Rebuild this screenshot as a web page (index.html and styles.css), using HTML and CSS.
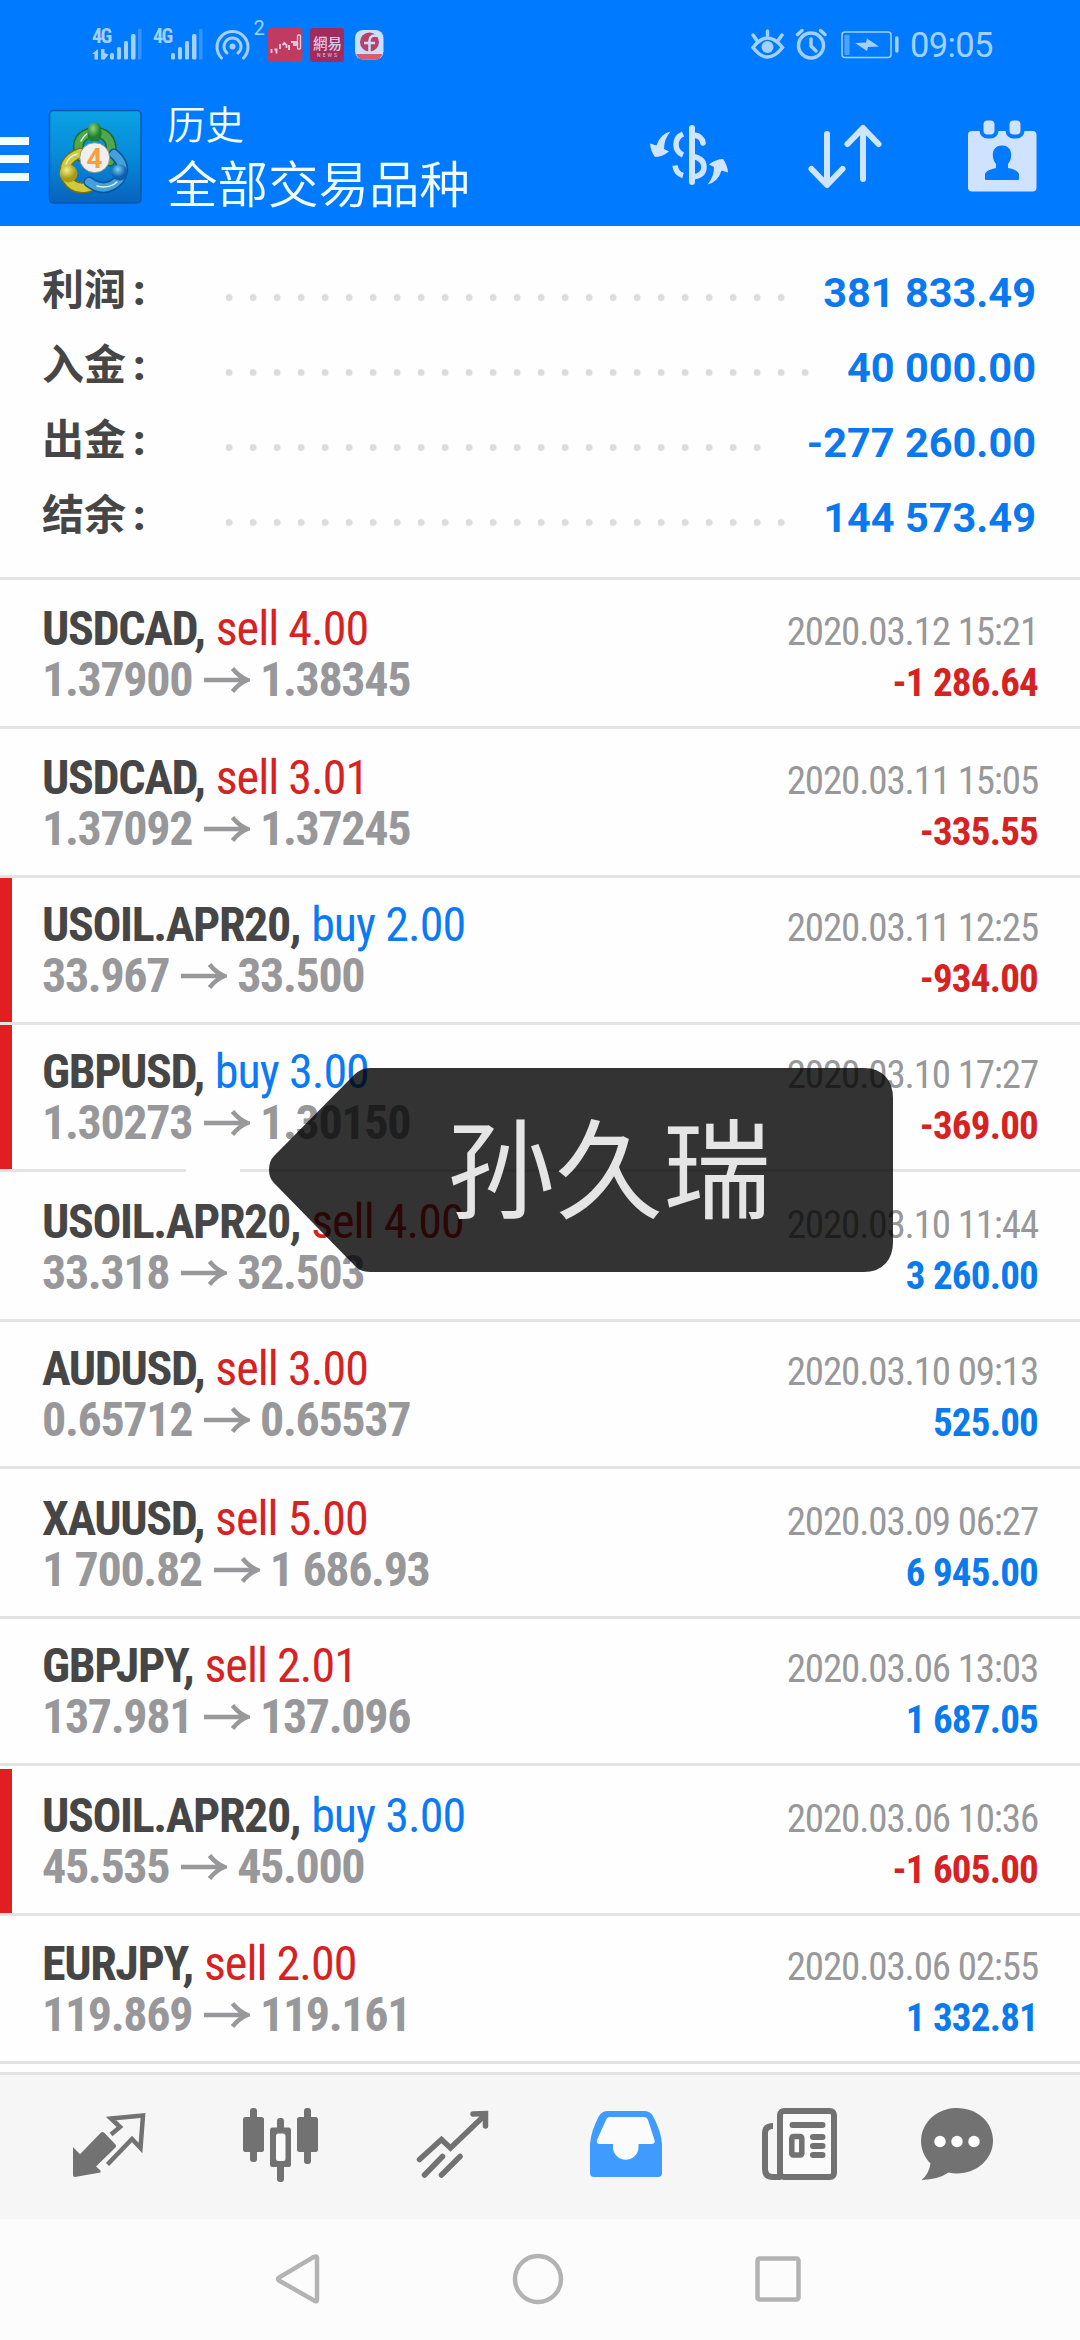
FILE: index.html
```html
<!DOCTYPE html>
<html lang="zh-CN">
<head>
<meta charset="utf-8">
<title>历史</title>
<link rel="stylesheet" href="styles.css">
</head>
<body>
<header class="top">
  <div class="status">
    <svg class="status-left" viewBox="88 16 300 50" width="300" height="50">
      <g fill="#a3d0ff">
        <g class="net"><text x="92" y="42.500">4G</text><text x="153" y="42.500">4G</text></g>
        <path d="M92 54l6-5v10.500h-3.500v-5.500zM101 49h3.500v4l4 1.500l-4 5h-3.500z"/>
        <rect x="110" y="53" width="4" height="6.500" rx="1.500"/><rect x="117" y="47" width="4" height="12.500" rx="1.500"/><rect x="124" y="41" width="4" height="18.500" rx="1.500"/><rect x="131" y="34" width="4.500" height="25.500" rx="1.500"/><rect x="138" y="29" width="3.500" height="30.500" opacity=".3"/>
        <rect x="171" y="53" width="4" height="6.500" rx="1.500"/><rect x="178" y="47" width="4" height="12.500" rx="1.500"/><rect x="185" y="41" width="4" height="18.500" rx="1.500"/><rect x="192" y="34" width="4.500" height="25.500" rx="1.500"/><rect x="199" y="29" width="3.500" height="30.500" opacity=".3"/>
        <circle cx="232.500" cy="46.500" r="3"/>
        <text class="count" x="253.500" y="35">2</text>
      </g>
      <g fill="none" stroke="#a3d0ff" stroke-width="3" stroke-linecap="round">
        <path d="M221.500 58a15.500 15.500 0 1 1 22 0M227 53a8.500 8.500 0 1 1 11 0"/>
      </g>
      <rect x="268" y="28" width="34.500" height="34" rx="3" fill="#bf3b62"/>
      <path d="M271.500 49v4M274.500 49.500h2v4M280 44v5M282.500 45l2-2 2 2v3M289 45v5M291 42h3v4M296 41v5" fill="none" stroke="#ead0e4" stroke-width="1.800"/>
      <rect x="297.500" y="35" width="3" height="14" rx="1" fill="none" stroke="#ead0e4" stroke-width="1.300"/>
      <rect x="310" y="28" width="34" height="34" rx="3" fill="#a02b5d"/>
      <text class="news" x="313" y="48.500" fill="#dccbe8">網易</text>
      <text class="news-sub" x="317" y="56.500" textLength="20" fill="#dccbe8">NEWS</text>
      <rect x="355" y="30" width="28.500" height="29.500" rx="8" fill="#c9dfff"/>
      <path d="M356 54h26.500q-2 5.500-7 5.500h-12.500q-5 0-7-5.500z" fill="#d85d6f"/>
      <circle cx="369.500" cy="42" r="9.500" fill="#b94166"/>
      <path d="M378 36q-8-2-8.500 4.500v13M364 43h11" fill="none" stroke="#c9dfff" stroke-width="2.500"/>
    </svg>
    <svg class="status-right" viewBox="748 24 154 40" width="154" height="40">
      <g fill="none" stroke="#a3d0ff" stroke-width="3.500" stroke-linecap="round">
        <path d="M753 47.500q14.500-19 29.500 0q-15 19-29.500 0zM767.500 31v4M753 35l3.500 5M782 35l-3.500 5"/>
        <circle cx="811" cy="45.500" r="12.500"/><path d="M811 39v7l5 5M797.500 34.500l4.500-4M825 34.500l-4.500-4"/>
        <path d="M896.800 38v13"/>
        <rect x="842" y="32" width="49" height="25.500" rx="3" stroke-width="1.500"/>
      </g>
      <circle cx="767.500" cy="47" r="6" fill="#a3d0ff"/>
      <rect x="844.500" y="35" width="5" height="20" rx="1" fill="#4da3ff"/>
      <path d="M855 43l11-0.500 1-4 12 8-11 .5-1 4z" fill="#a3d0ff"/>
    </svg>
    <span class="clock">09:05</span>
  </div>
  <div class="bar">
    <div class="menu"><i></i><i></i><i></i></div>
    <svg class="logo" viewBox="48 109 95 96" width="95" height="96">
      <defs>
        <linearGradient id="sky" x1="0" y1="0" x2="0" y2="1"><stop offset="0" stop-color="#0aa2e4"/><stop offset=".5" stop-color="#078ad8"/><stop offset="1" stop-color="#0763bd"/></linearGradient>
        <radialGradient id="gr" cx=".4" cy=".3"><stop offset="0" stop-color="#8fd67c"/><stop offset="1" stop-color="#1c7f31"/></radialGradient>
        <radialGradient id="ye" cx=".4" cy=".3"><stop offset="0" stop-color="#f3f08c"/><stop offset="1" stop-color="#a89a12"/></radialGradient>
        <radialGradient id="bl" cx=".4" cy=".3"><stop offset="0" stop-color="#7cd0f7"/><stop offset="1" stop-color="#0b5fae"/></radialGradient>
      </defs>
      <rect x="49.500" y="110.500" width="91.500" height="92.500" rx="4" fill="url(#sky)" stroke="#0759ae" stroke-width="1.500"/>
      <g fill="none" stroke-linecap="round">
        <path d="M110 161q6-27-15-29q-22 3-15 24" stroke="#1b6b2e" stroke-width="11"/>
        <path d="M110 161q6-27-15-29q-22 3-15 24" stroke="#4fa84c" stroke-width="8"/>
        <path d="M80 153q-20 8-13 26q9 14 27 6" stroke="#77700d" stroke-width="11"/>
        <path d="M80 153q-20 8-13 26q9 14 27 6" stroke="#cfcb38" stroke-width="8"/>
        <path d="M114 154q14 12 5 26q-14 14-30 2" stroke="#0c5599" stroke-width="11"/>
        <path d="M114 154q14 12 5 26q-14 14-30 2" stroke="#45a0dc" stroke-width="8"/>
        <path d="M81 141q4-7 8-8M66 164q3-8 11-10M97 186q12 3 20-4" stroke="#e2f5d8" stroke-width="1.500"/>
      </g>
      <circle cx="94.500" cy="129" r="6.500" fill="url(#gr)"/><path d="M94.500 123c8 0 9 14 4 18h-8c-5-4-4-18 4-18z" fill="url(#gr)"/><circle cx="68.500" cy="173.500" r="9" fill="url(#ye)"/><circle cx="119.500" cy="172.500" r="8" fill="url(#bl)"/>
      <circle cx="94.700" cy="157.700" r="15" fill="#f1eef0" stroke="#8c9a84" stroke-width="1"/>
      <text class="four" x="94.500" y="167.500" text-anchor="middle">4</text>
    </svg>
    <div class="titles"><div class="title">历史</div><div class="subtitle">全部交易品种</div></div>
    <svg class="act-money" viewBox="648 115 84 80" width="84" height="80">
      <g fill="none" stroke="#cfe5ff" stroke-width="5.500">
        <path d="M692 128v54" stroke-width="6" stroke-linecap="round"/>
        <path d="M683 134q-7 3-7 10.500t7 10.500"/><path d="M683 175.500q-7-2-8-10"/><path d="M694 135q8 1 9 8" stroke-linecap="round"/><path d="M693 156.500q11 2 11 10.500t-11 10"/>
      </g>
      <path id="turn" d="M670.500 131.500Q660 134 656.500 145.500L650 143.500Q650.500 151 655 157Q662 157 669 151.500L664 149Q664 139 670.500 131.500Z" fill="#cfe5ff"/>
      <use href="#turn" transform="rotate(180 689 158)"/>
    </svg>
    <svg class="act-sort" viewBox="804 115 82 80" width="82" height="80">
      <g fill="none" stroke="#cfe5ff" stroke-width="6" stroke-linecap="round" stroke-linejoin="round"><path d="M827 134v50.500M811.500 169l15.500 16 15.500-16M863 179v-50.500M847.500 144l15.500-16 15.500 16"/></g>
    </svg>
    <svg class="act-date" viewBox="964 115 76 80" width="76" height="80">
      <rect x="968" y="131" width="68.500" height="60.500" rx="4" fill="#cfe2ff"/>
      <g fill="#cfe2ff" stroke="#007aff" stroke-width="4"><rect x="981.500" y="118.500" width="15" height="18" rx="6"/><rect x="1007.500" y="118.500" width="15" height="18" rx="6"/></g>
      <path d="M1002 145.500c11 0 11 13 6 18.500v4q10 2 11 6v5q0 1-1 1h-32q-1 0-1-1v-5q1-4 11-6v-4c-5-5.500-5-18.500 6-18.500z" fill="#007aff"/>
    </svg>
  </div>
</header>

<section class="summary">
  <div class="sum-row"><span class="label">利润<b>:</b></span><span class="dots"></span><span class="amount">381 833.49</span></div>
  <div class="sum-row"><span class="label">入金<b>:</b></span><span class="dots"></span><span class="amount">40 000.00</span></div>
  <div class="sum-row"><span class="label">出金<b>:</b></span><span class="dots"></span><span class="amount">-277 260.00</span></div>
  <div class="sum-row"><span class="label">结余<b>:</b></span><span class="dots"></span><span class="amount">144 573.49</span></div>
</section>

<svg class="defs" width="0" height="0"><symbol id="arrow" viewBox="0 0 46 26"><path d="M0 13h43M28.500 1.500q7 8.500 15 11.500q-8 3-15 11.500" fill="none" stroke="#98989b" stroke-width="4.500"/></symbol></svg>

<main class="deals">
  <div class="deal h149"><div class="left"><div><b>USDCAD,</b> <span class="sell">sell 4.00</span></div><div class="price">1.37900<svg><use href="#arrow"/></svg>1.38345</div></div><div class="right"><div>2020.03.12 15:21</div><div class="loss">-1 286.64</div></div></div>
  <div class="deal h149"><div class="left"><div><b>USDCAD,</b> <span class="sell">sell 3.01</span></div><div class="price">1.37092<svg><use href="#arrow"/></svg>1.37245</div></div><div class="right"><div>2020.03.11 15:05</div><div class="loss">-335.55</div></div></div>
  <div class="deal h147 marked"><div class="left"><div><b>USOIL.APR20,</b> <span class="buy">buy 2.00</span></div><div class="price">33.967<svg><use href="#arrow"/></svg>33.500</div></div><div class="right"><div>2020.03.11 12:25</div><div class="loss">-934.00</div></div></div>
  <div class="deal h147 marked"><div class="left"><div><b>GBPUSD,</b> <span class="buy">buy 3.00</span></div><div class="price">1.30273<svg><use href="#arrow"/></svg>1.30150</div></div><div class="right"><div>2020.03.10 17:27</div><div class="loss">-369.00</div></div></div>
  <div class="deal h150"><div class="left"><div><b>USOIL.APR20,</b> <span class="sell">sell 4.00</span></div><div class="price">33.318<svg><use href="#arrow"/></svg>32.503</div></div><div class="right"><div>2020.03.10 11:44</div><div class="gain">3 260.00</div></div></div>
  <div class="deal h147"><div class="left"><div><b>AUDUSD,</b> <span class="sell">sell 3.00</span></div><div class="price">0.65712<svg><use href="#arrow"/></svg>0.65537</div></div><div class="right"><div>2020.03.10 09:13</div><div class="gain">525.00</div></div></div>
  <div class="deal h150"><div class="left"><div><b>XAUUSD,</b> <span class="sell">sell 5.00</span></div><div class="price">1 700.82<svg><use href="#arrow"/></svg>1 686.93</div></div><div class="right"><div>2020.03.09 06:27</div><div class="gain">6 945.00</div></div></div>
  <div class="deal h147"><div class="left"><div><b>GBPJPY,</b> <span class="sell">sell 2.01</span></div><div class="price">137.981<svg><use href="#arrow"/></svg>137.096</div></div><div class="right"><div>2020.03.06 13:03</div><div class="gain">1 687.05</div></div></div>
  <div class="deal h150 marked short"><div class="left"><div><b>USOIL.APR20,</b> <span class="buy">buy 3.00</span></div><div class="price">45.535<svg><use href="#arrow"/></svg>45.000</div></div><div class="right"><div>2020.03.06 10:36</div><div class="loss">-1 605.00</div></div></div>
  <div class="deal h148"><div class="left"><div><b>EURJPY,</b> <span class="sell">sell 2.00</span></div><div class="price">119.869<svg><use href="#arrow"/></svg>119.161</div></div><div class="right"><div>2020.03.06 02:55</div><div class="gain">1 332.81</div></div></div>
</main>

<nav class="tabs">
  <svg viewBox="69 2100 80 90"><path d="M73 2147l7 7.300L101 2132.500q1.500-1 3 0l11.500 12q1.500 1.500 0 3L96 2166.500l4.500 4v2L75 2177q-2 0-2-2z" fill="#727272"/><path d="M111 2134.500l9-7.500-9-8.500 32-3-2.500 32.500-8.500-9-24.500 25.500" fill="none" stroke="#727272" stroke-width="4.500"/></svg>
  <svg viewBox="241 2100 80 90"><g fill="#727272"><rect x="243" y="2117" width="21" height="35" rx="2.500"/><rect x="250" y="2108" width="7" height="54" rx="3"/><rect x="277" y="2118" width="7" height="64" rx="3"/><rect x="270" y="2127.500" width="21" height="39.500" rx="2.500"/><rect x="297" y="2117" width="21" height="35" rx="2.500"/><rect x="304" y="2108" width="7" height="56" rx="3"/></g><rect x="276" y="2133.500" width="9.500" height="27.500" rx="2.500" fill="#fafafa"/></svg>
  <svg viewBox="413 2100 80 90"><path d="M419.500 2159.500l22-20 9 8.500 35-33.500M473 2114l12.500-.5v12.500M424.500 2175l18-18.500M441.500 2175l18.500-18.500" fill="none" stroke="#727272" stroke-width="5.500" stroke-linecap="round"/></svg>
  <svg viewBox="585 2100 80 90"><path d="M590 2144q1-13 9-28 3-5 9-5h36q6 0 9 5 8 15 9 28v29q0 4-4 4h-64q-4 0-4-4z" fill="#409bff"/><path d="M606 2120q1-3 4-3h33q4 0 5 3l6.500 20q1 4-3 4h-13v3a12.500 12.500 0 0 1-25.500 0v-3h-13q-4 0-3-4z" fill="#fbfbfb"/></svg>
  <svg viewBox="757 2100 80 90"><rect x="780" y="2111" width="54" height="66" rx="4" fill="#fbfbfb"/><g fill="none" stroke="#727272" stroke-width="6"><rect x="780" y="2111" width="54" height="66" rx="4"/><path d="M773 2126q-8 0-8 7v36q0 8 8 8h8"/><g stroke-linecap="round"><path d="M792.500 2125h30M813 2137h9.500M813 2146h9.500M813 2155h9.500"/></g><rect x="791.800" y="2136.500" width="10" height="18.500" rx="1.500" stroke-width="5.500"/></g></svg>
  <svg class="chat" viewBox="917 2100 80 90"><path d="M957 2108c20 0 36 14 36 32.500s-16 33-36 33q-4 0-8.500-1-10 7-27 7.500 7.500-6 9-16.500c-21-23-4-55.500 26.500-55.500z" fill="#727272"/><g fill="#fff"><circle cx="940" cy="2141.500" r="5.700"/><circle cx="957" cy="2141.500" r="5.700"/><circle cx="974" cy="2141.500" r="5.700"/></g></svg>
</nav>
<footer class="keys">
  <svg viewBox="272 2250 51 58" width="51" height="58"><path d="M315.500 2256.500q1.500 0 1.500 2v41q0 2.500-2 1.500l-36-20.500q-2-1.500 0-3l34.500-20.500z"/></svg>
  <svg viewBox="510 2250 56 58" width="56" height="58"><circle cx="538" cy="2279" r="23"/></svg>
  <svg viewBox="751 2250 54 58" width="54" height="58"><rect x="757.500" y="2258.500" width="41" height="41" rx="2"/></svg>
</footer>

<div class="tag">
  <svg viewBox="269 1068 624 204" width="624" height="204"><path d="M374 1068H864Q878 1068 886 1077Q893 1085 893 1098V1242Q893 1255 886 1263Q878 1272 864 1272H370Q361 1272 355 1266L274 1183Q269 1178 269 1170Q269 1161 274 1156L354 1075Q361 1068 370 1068Z" fill="#000" fill-opacity=".8"/></svg>
  <span>孙久瑞</span>
</div>
</body>
</html>
```
FILE: styles.css
```css
* { box-sizing: border-box; }
body {
  margin: 0;
  width: 1080px;
  height: 2340px;
  position: relative;
  display: flex;
  flex-direction: column;
  overflow: hidden;
  background: #fefefe;
  font-family: "Roboto Condensed", Roboto, "Noto Sans CJK SC", sans-serif;
}
svg { display: block; flex: none; }
.defs { position: absolute; }

.top { height: 226px; background: #007aff; color: #f2fdff; }
.status { height: 88px; padding: 16px 88px 0; display: flex; align-items: flex-start; color: #a3d0ff; }
.status-right { margin: 8px 8px 0 360px; }
.net { font-size: 20px; font-weight: 700; letter-spacing: -1.5px; }
.count { font: 20px Roboto, sans-serif; }
.news { font: 500 14.5px "Noto Sans CJK TC", sans-serif; }
.news-sub { font: 400 5px Roboto, sans-serif; }
.clock { font: 34.5px/40px Roboto, sans-serif; letter-spacing: -0.6px; margin-top: 9px; }
.bar { display: flex; height: 138px; align-items: flex-start; }
.menu { width: 29px; margin-top: 49px; display: flex; flex-direction: column; gap: 10px; }
.menu i { height: 8px; background: #f2fdff; }
.logo { margin: 21px 0 0 19px; }
.four { font: 700 28px Roboto, sans-serif; fill: #f5a03c; }
.titles { margin: 6px 0 0 24px; width: 481px; font-family: "Noto Sans CJK SC", sans-serif; font-weight: 350; }
.title { font-size: 38.5px; line-height: 56px; }
.subtitle { font-size: 50.5px; line-height: 63px; }
.act-money, .act-sort, .act-date { margin-top: 27px; }
.act-sort { margin-left: 72px; }
.act-date { margin-left: 78px; }

.summary { height: 354px; padding: 30px 44px 0 42px; border-bottom: 3px solid #e3e3e3; }
.sum-row { height: 75px; display: flex; }
.label { width: 184px; font: 700 42px/62px "Noto Sans CJK SC", sans-serif; color: #464646; }
.label b { font-family: Roboto, sans-serif; margin-left: 7px; }
.dots { flex: 1; margin-right: 30px; background: radial-gradient(circle at 3px 50%, #dcdcdc 2.8px, transparent 4.2px) 0 4px / 24px 75px repeat-x; }
.amount { font: 700 41.5px/74px Roboto, sans-serif; color: #0a78ee; }

.deal { display: flex; justify-content: space-between; align-items: flex-end; padding: 0 42px 0 42px; border-bottom: 3px solid #e3e3e3; }
.h147 { height: 147px; }
.h148 { height: 148px; }
.h149 { height: 149px; }
.h150 { height: 150px; }
.marked { background: linear-gradient(#e21e20, #e21e20) 0 0 / 12px 100% no-repeat padding-box; }
.short { background-position: 0 3px; }
.left { font-size: 48px; line-height: 51px; color: #464646; padding-bottom: 21px; white-space: nowrap; }
.left b { letter-spacing: -1.4px; }
.left span { letter-spacing: -0.95px; }
.right { font-size: 39px; line-height: 51px; color: #98989b; padding-bottom: 17px; text-align: right; white-space: nowrap; letter-spacing: -1.15px; }
.price { display: flex; align-items: center; color: #98989b; font-weight: 700; letter-spacing: -1.35px; }
.price svg { width: 46px; height: 26px; margin: 1px 10px 0 12px; }
.sell { color: #d62222; }
.buy { color: #0a7af5; }
.loss { color: #d62222; font-weight: 700; letter-spacing: -0.8px; }
.gain { color: #0a7aec; font-weight: 700; letter-spacing: -0.8px; }

.tabs { margin-top: 8px; height: 147px; border-top: 3px solid #e3e3e3; background: #f6f6f6; padding: 25px 0 0 69px; display: flex; gap: 92px; }
.tabs svg { width: 80px; height: 90px; overflow: visible; }
.tabs .chat { margin-left: -12px; }
.keys { height: 121px; background: #fcfcfc; display: flex; padding: 31px 0 0 272px; }
.keys svg { fill: none; stroke: #b3b3b3; stroke-width: 4.500; margin-right: 187px; }
.keys svg + svg { margin-right: 185px; }

.tag { position: absolute; left: 269px; top: 1068px; width: 624px; height: 204px; }
.tag::before { content: ""; position: absolute; left: -83px; top: 100px; width: 54px; height: 5px; background: #fefefe; }
.tag span { position: absolute; left: 178px; top: -7px; font: 108px/204px "Noto Sans CJK SC", sans-serif; color: #e5e5e5; white-space: nowrap; }
```
